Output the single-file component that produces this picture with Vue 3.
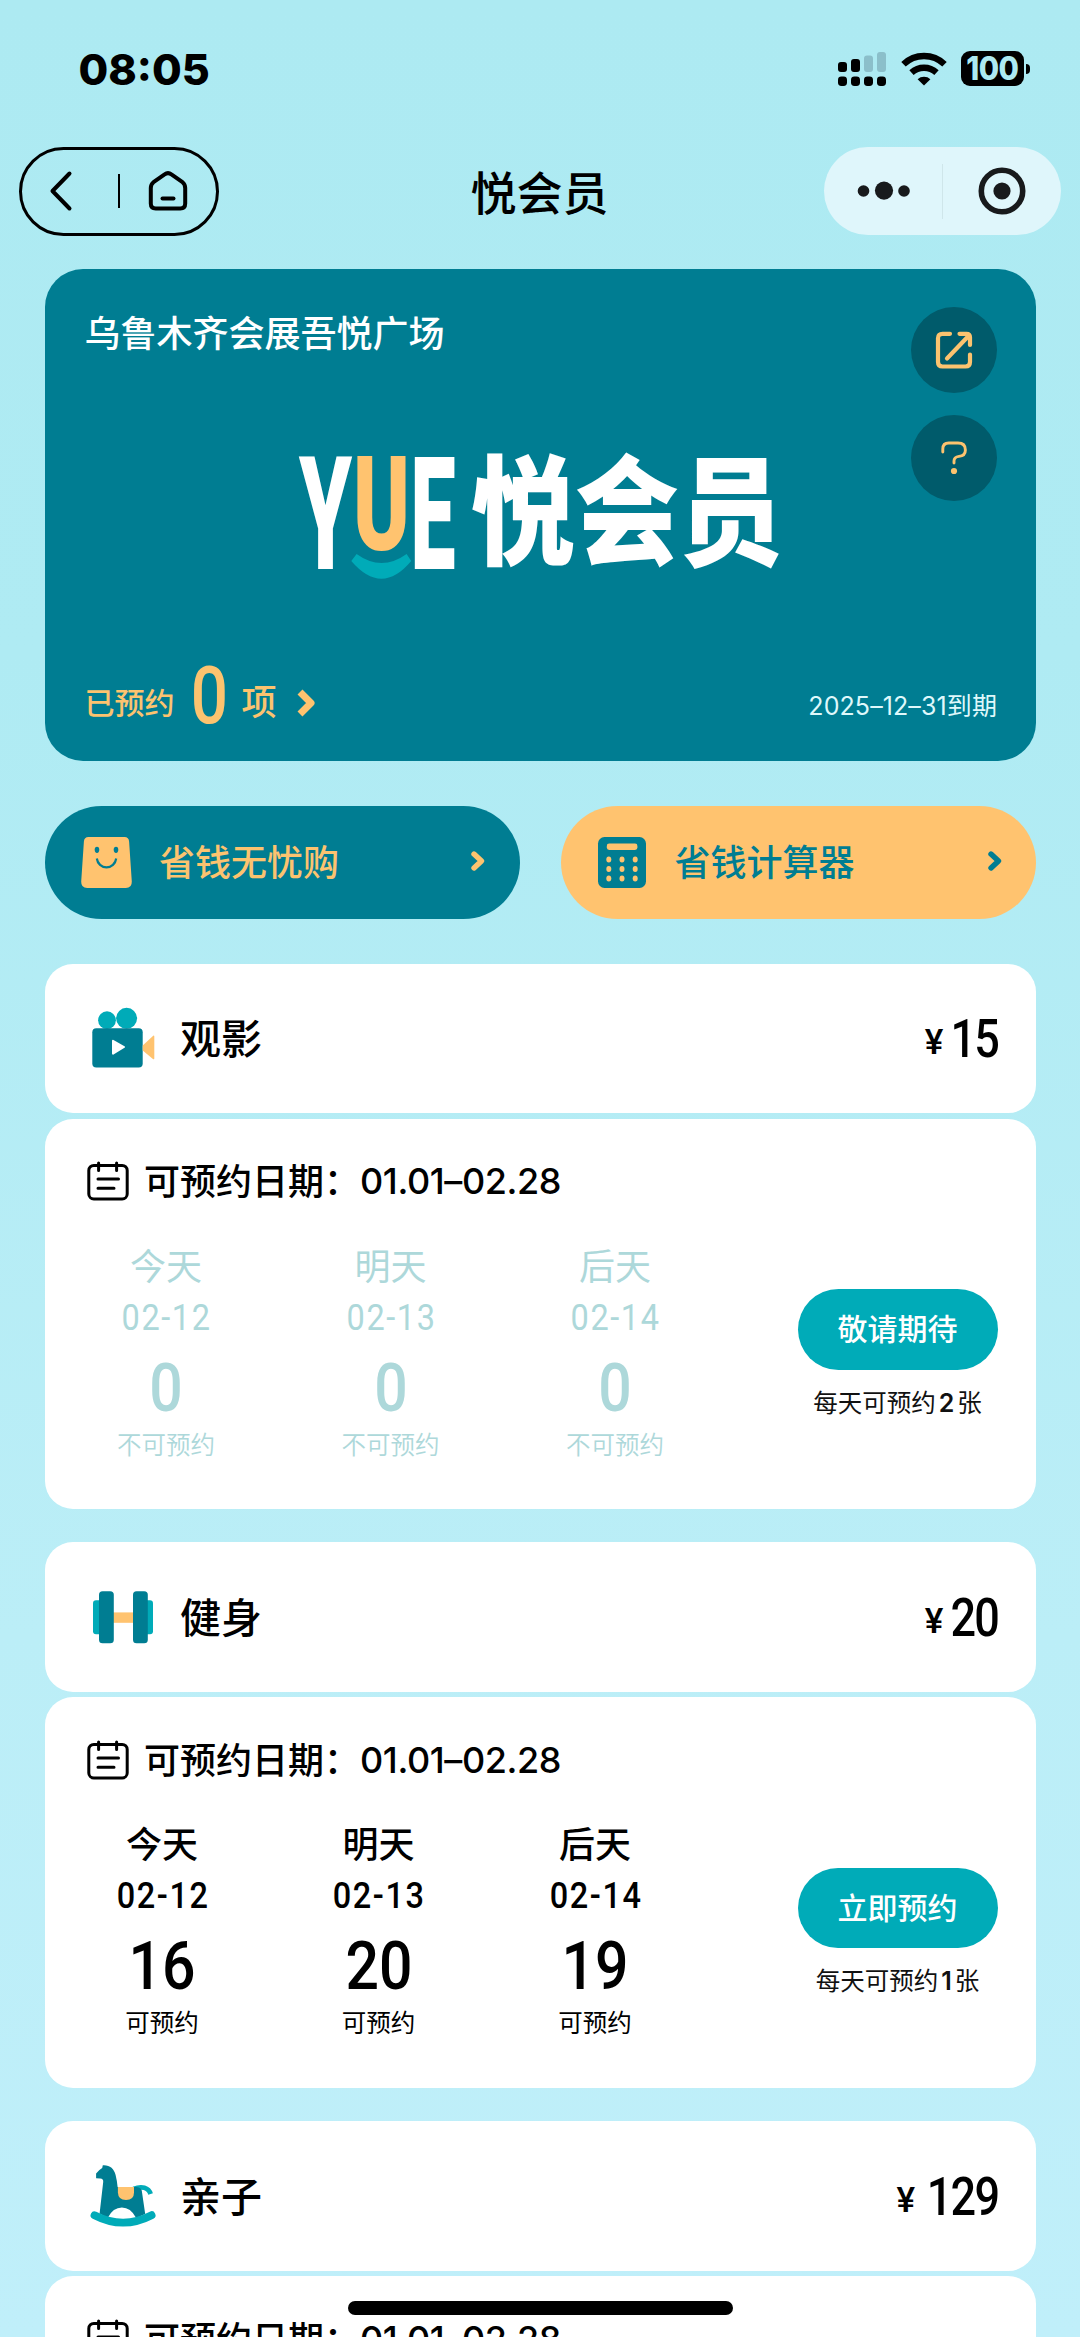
<script setup>
const services = [
  {
    icon: 'movie',
    name: '观影',
    price: '15',
    range: '01.01–02.28',
    soldOut: true,
    action: '敬请期待',
    limit: 2,
    days: [
      { label: '今天', date: '02-12', count: 0, status: '不可预约' },
      { label: '明天', date: '02-13', count: 0, status: '不可预约' },
      { label: '后天', date: '02-14', count: 0, status: '不可预约' },
    ],
  },
  {
    icon: 'fitness',
    name: '健身',
    price: '20',
    range: '01.01–02.28',
    soldOut: false,
    action: '立即预约',
    limit: 1,
    days: [
      { label: '今天', date: '02-12', count: 16, status: '可预约' },
      { label: '明天', date: '02-13', count: 20, status: '可预约' },
      { label: '后天', date: '02-14', count: 19, status: '可预约' },
    ],
  },
  {
    icon: 'kids',
    name: '亲子',
    price: '129',
    range: '01.01–02.28',
    days: [],
  },
]
const keyRows = [22.6, 32, 41.4]
const keyCols = [10.8, 24, 37.2]
</script>

<template>
  <div class="screen">
    <header class="status">
      <span class="time">08:05</span>
      <div class="indicators">
        <svg class="signal" width="48" height="36" viewBox="0 0 48 36">
          <rect x="0" y="11" width="9" height="10" rx="3" />
          <rect x="13" y="8" width="9" height="13" rx="3" />
          <rect x="26" y="4.5" width="9" height="16.5" rx="3" class="faint" />
          <rect x="39" y="1" width="9" height="20" rx="3" class="faint" />
          <rect v-for="x in [0, 13, 26, 39]" :key="x" :x="x" y="25.5" width="9" height="9.5" rx="3.4" />
        </svg>
        <svg class="wifi" width="46" height="34" viewBox="0 0 46 34">
          <g fill="none" stroke="#000" stroke-width="6.4">
            <path d="M2.5 12.3 A29.5 29.5 0 0 1 43.5 12.3" />
            <path d="M10.5 20.6 A18.5 18.5 0 0 1 35.5 20.6" />
          </g>
          <path d="M16.6 27.2 A9.5 9.5 0 0 1 29.4 27.2 L23 33.6 Z" />
        </svg>
        <div class="battery"><span>100</span></div>
        <i class="nub"></i>
      </div>
    </header>

    <nav class="nav">
      <div class="nav-left">
        <svg width="22" height="40" viewBox="0 0 22 40"><path d="M19.5 2.5 L2.5 20 L19.5 37.5" /></svg>
        <i></i>
        <svg width="40" height="40" viewBox="0 0 40 40">
          <path d="M16.6 3.4 Q20 0.8 23.4 3.4 L34.5 11.2 Q37.2 13.4 37.2 17 V32.5 Q37.2 37.4 32.3 37.4 H7.7 Q2.8 37.4 2.8 32.5 V17 Q2.8 13.4 5.5 11.2 Z" />
          <path d="M14.5 27.4 H25.5" />
        </svg>
      </div>
      <h1>悦会员</h1>
      <div class="nav-right">
        <svg width="54" height="20" viewBox="0 0 54 20">
          <circle cx="6.5" cy="10" r="5.8" /><circle cx="27" cy="9.6" r="9.1" /><circle cx="47" cy="10" r="5.8" />
        </svg>
        <i></i>
        <svg width="48" height="48" viewBox="0 0 48 48">
          <circle cx="24" cy="24" r="20.7" fill="none" stroke="#181a1c" stroke-width="5.6" />
          <circle cx="24" cy="24" r="8.6" />
        </svg>
      </div>
    </nav>

    <section class="member">
      <h2>乌鲁木齐会展吾悦广场</h2>
      <svg class="logo" width="484" height="134" viewBox="0 0 484 134">
        <g class="latin">
          <text transform="translate(0 117) scale(1 1.36)" textLength="53" lengthAdjust="spacingAndGlyphs" fill="#fff">Y</text>
          <text transform="translate(54 97.5) scale(1 1.13)" textLength="57" lengthAdjust="spacingAndGlyphs" fill="#ffc36f">U</text>
          <text transform="translate(111.5 117) scale(1 1.36)" textLength="45" lengthAdjust="spacingAndGlyphs" fill="#fff">E</text>
        </g>
        <path d="M57.6 102 Q82.6 120 107.6 102 L112.2 109 Q82.6 144.4 52.3 109 Z" fill="#00abb8" />
        <text class="hanzi" transform="translate(172 104) scale(1 1.15)" textLength="312" lengthAdjust="spacingAndGlyphs">悦会员</text>
      </svg>
      <div class="tools">
        <span>
          <svg width="38" height="38" viewBox="0 0 38 38">
            <g fill="none" stroke="#fcc36f" stroke-width="4.2" stroke-linecap="round" stroke-linejoin="round">
              <path d="M15 2.8 H7.5 Q3 2.8 3 7.3 V31 Q3 35.5 7.5 35.5 H30.5 Q35 35.5 35 31 V23.5" />
              <path d="M24.5 2.8 H31.5 Q35 2.8 35 6.3 V14 M33.5 5 L12 27.5" />
            </g>
          </svg>
        </span>
        <span>
          <svg width="28" height="34" viewBox="0 0 28 34">
            <path d="M2.8 11 V8 Q2.8 2 8.8 2 H18 Q25.4 2 25.4 9 Q25.4 14.8 19 15.4 Q14 16 14 20 V22" fill="none" stroke="#fcc36f" stroke-width="2.9" stroke-linecap="round" />
            <circle cx="14" cy="30" r="3.1" fill="#fcc36f" />
          </svg>
        </span>
      </div>
      <div class="booked">
        <span class="booked-label">已预约</span><b>0</b><span class="booked-unit">项</span>
        <svg width="20" height="28" viewBox="0 0 20 28"><path d="M3 3 L14 14 L3 25" fill="none" stroke="#ffc36f" stroke-width="7" stroke-linejoin="round" /></svg>
      </div>
      <p class="expiry">2025–12–31到期</p>
    </section>

    <section class="shortcuts">
      <a class="teal">
        <svg width="51" height="51" viewBox="0 0 51 51">
          <path d="M7.5 0 H43.5 Q47.8 0 48.1 4.5 L50.8 44.5 Q51 51 44.8 51 H6.2 Q0 51 .2 44.5 L2.9 4.5 Q3.2 0 7.5 0 Z" fill="#ffc36f" />
          <ellipse cx="16" cy="12.8" rx="2.3" ry="3.1" fill="#007d92" /><ellipse cx="35" cy="12.8" rx="2.3" ry="3.1" fill="#007d92" />
          <path d="M15.8 21.5 A9.8 10.4 0 0 0 35.2 21.5" fill="none" stroke="#007d92" stroke-width="2.2" />
        </svg>
        <span>省钱无忧购</span>
        <svg class="arrow" width="14" height="20" viewBox="0 0 14 20"><path d="M3 3 L10.5 10 L3 17" /></svg>
      </a>
      <a class="gold">
        <svg width="48" height="51" viewBox="0 0 48 51">
          <rect width="48" height="51" rx="6.5" fill="#007d92" />
          <rect x="8.8" y="6.5" width="30.6" height="6.4" rx="2.4" fill="#ffc36f" />
          <template v-for="y in keyRows" :key="y">
            <ellipse v-for="x in keyCols" :key="x" :cx="x" :cy="y" rx="2.5" ry="3" fill="#ffc36f" />
          </template>
        </svg>
        <span>省钱计算器</span>
        <svg class="arrow" width="14" height="20" viewBox="0 0 14 20"><path d="M3 3 L10.5 10 L3 17" /></svg>
      </a>
    </section>

    <section v-for="s in services" :key="s.name" class="service">
      <div class="head">
        <svg v-if="s.icon === 'movie'" width="66" height="66" viewBox="0 0 66 66">
          <circle cx="17" cy="15.2" r="8.9" fill="#00abb8" /><circle cx="36.6" cy="13.3" r="10.5" fill="#00abb8" />
          <rect x="2.3" y="23.3" width="50.4" height="39.2" rx="4" fill="#007d92" />
          <path d="M23 35.8 L34 42 L23 48.6 Z" fill="#fff" stroke="#fff" stroke-width="2" stroke-linejoin="round" />
          <path d="M52.7 40.5 L63.2 30.7 Q64.3 30.2 64.3 31.5 V53.5 Q64.3 54.6 63.2 54.2 L52.7 45.5 Z" fill="#ffc36f" />
        </svg>
        <svg v-else-if="s.icon === 'fitness'" width="66" height="66" viewBox="0 0 66 66">
          <rect x="3" y="16.3" width="14" height="34" rx="3" fill="#00abb8" /><rect x="49" y="16.3" width="14" height="34" rx="3" fill="#00abb8" />
          <rect x="22" y="28.4" width="22" height="10.4" fill="#ffc36f" />
          <rect x="9" y="7.3" width="14.8" height="52" rx="3.6" fill="#007d92" /><rect x="43" y="7.3" width="14.8" height="52" rx="3.6" fill="#007d92" />
        </svg>
        <svg v-else width="66" height="66" viewBox="0 0 66 66">
          <g transform="translate(.6 2)">
            <path d="M43 24 C51 20.6 58 22.5 60 29" fill="none" stroke="#00abb8" stroke-width="4.8" />
            <path d="M12.2 0.3 C19 -.2 23.5 3.5 25 10 Q26.5 16 27 22 H43.4 H46 Q50.4 22.5 51.2 25.8 L54.6 49 L45.6 53 Q40 42.6 31.3 42.6 Q22.5 42.6 17 53 L9 48.6 L12.6 17 Q13 13.6 9.6 13.4 L5.5 13.3 V8.6 Q8 5 11.6 3 Z" fill="#007d92" />
            <path d="M27.3 22 H43.4 V27.5 Q43.4 35 35.4 35 Q27.6 35 27.3 27.5 Z" fill="#ffc36f" />
            <path d="M3.9 50.2 Q32.5 65 61 50.2" fill="none" stroke="#00abb8" stroke-width="7.8" stroke-linecap="round" />
          </g>
        </svg>
        <h3>{{ s.name }}</h3>
        <div class="price"><i>¥</i><b>{{ s.price }}</b></div>
      </div>
      <div class="body">
        <div class="range">
          <svg width="42" height="40" viewBox="0 0 42 40">
            <g fill="none" stroke="#000" stroke-width="3" stroke-linecap="round">
              <rect x="1.8" y="4.4" width="38.4" height="33.6" rx="5" />
              <path d="M11.6 2 V9.6 M29.6 2 V9.6 M11 18 H31.5 M11 27.3 H27" />
            </g>
          </svg>
          <span class="range-label">可预约日期：</span><span class="range-value">{{ s.range }}</span>
        </div>
        <div v-if="s.days.length" class="slots">
          <div class="days" :class="{ off: s.soldOut }">
            <div v-for="d in s.days" :key="d.date" class="day">
              <span class="d-label">{{ d.label }}</span>
              <span class="d-date">{{ d.date }}</span>
              <b class="d-count">{{ d.count }}</b>
              <span class="d-status">{{ d.status }}</span>
            </div>
          </div>
          <div class="book">
            <button>{{ s.action }}</button>
            <p>每天可预约<b>{{ s.limit }}</b>张</p>
          </div>
        </div>
      </div>
    </section>
    <div class="home-bar"></div>
  </div>
</template>

<style>
body { margin: 0; }
</style>

<style scoped>
.screen {
  position: relative;
  box-sizing: border-box;
  width: 1080px;
  height: 2337px;
  overflow: hidden;
  padding: 0 44.5px;
  background: linear-gradient(#adeaf2 0%, #afebf3 28%, #bbeef7 70%, #c0effa 100%);
  color: #000;
  font-family: "Noto Sans CJK SC", sans-serif;
}
h1, h2, h3, p { margin: 0; font-weight: 500; }
i { font-style: normal; }
svg { display: block; flex: none; overflow: visible; }

.status {
  display: flex;
  justify-content: space-between;
  align-items: center;
  height: 137px;
  padding: 0 6px 0 34px;
}
.time { font: 800 43px/50px Inter, sans-serif; }
.indicators { display: flex; align-items: center; }
.wifi { margin-left: 15px; }
.faint { fill: #8bbfca; }
.battery {
  display: flex;
  align-items: center;
  justify-content: center;
  width: 63px;
  height: 35px;
  margin-left: 14px;
  border-radius: 9px;
  background: #000;
  color: #adeaf2;
}
.battery span { font: 800 32px/35px Inter, sans-serif; letter-spacing: -0.6px; transform: scaleX(.92); }
.nub { width: 4px; height: 10px; margin-left: 2px; border-radius: 0 5px 5px 0; background: #000; }

.nav {
  display: flex;
  justify-content: space-between;
  align-items: center;
  height: 88px;
  margin: 10px -25px 0;
}
.nav-left {
  box-sizing: border-box;
  display: flex;
  align-items: center;
  width: 200px;
  height: 89px;
  margin-left: -1px;
  padding-left: 28px;
  border: 3px solid #000;
  border-radius: 45px;
}
.nav-left svg { fill: none; stroke: #000; stroke-width: 4; stroke-linecap: round; stroke-linejoin: round; }
.nav-left i { width: 2.6px; height: 34px; margin: 0 28px 0 46px; background: #000; }
h1 { margin: -2px 0 0 37px; font-size: 46px; line-height: 60px; }
.nav-right {
  box-sizing: border-box;
  display: flex;
  align-items: center;
  width: 237px;
  height: 88px;
  padding-left: 33px;
  border-radius: 44px;
  background: #dff6fb;
}
.nav-right svg { fill: #181a1c; }
.nav-right i { width: 1.5px; height: 55px; margin: 0 35px 0 31px; background: #cfe6ea; }

.member {
  display: grid;
  grid-template: 1fr / 1fr;
  box-sizing: border-box;
  height: 492.5px;
  margin-top: 33.7px;
  padding: 38px 38.5px 28px 40px;
  border-radius: 38px;
  background: #007d92;
  color: #fff;
}
.member > * { grid-area: 1 / 1; }
h2 { font-size: 36px; line-height: 48px; }
.logo { align-self: start; justify-self: center; margin-top: 145px; }
.latin { font: 900 116px Roboto, sans-serif; }
.hanzi { font-size: 104px; font-weight: 900; fill: #fff; }
.tools { display: flex; flex-direction: column; gap: 22px; align-self: start; justify-self: end; width: 86px; }
.tools span {
  display: flex;
  align-items: center;
  justify-content: center;
  height: 86px;
  border-radius: 50%;
  background: #005b6b;
}
.booked { display: flex; align-items: center; align-self: end; height: 74px; color: #fcc36f; }
.booked-label { padding-top: 10px; font-size: 30px; line-height: 40px; font-weight: 500; }
.booked b { margin-left: 12px; font: 500 79px/74px Roboto, sans-serif; transform: scaleX(.83); }
.booked-unit { margin-left: 10px; padding-top: 7px; font-size: 35px; line-height: 40px; font-weight: 500; }
.booked svg { margin: 13px 0 0 21px; }
.expiry {
  align-self: end;
  justify-self: end;
  margin-bottom: 7px;
  font: 400 25px/40px Inter, "Noto Sans CJK SC", sans-serif;
  letter-spacing: 0.1px;
  color: #dff8fb;
}

.shortcuts { display: flex; gap: 41px; margin-top: 45px; }
.shortcuts a {
  box-sizing: border-box;
  display: flex;
  flex: 1;
  align-items: center;
  height: 113px;
  padding: 0 35px 0 36.5px;
  border-radius: 57px;
  font-size: 36px;
  line-height: 50px;
  font-weight: 500;
}
.shortcuts span { margin: -5px auto 0 27px; }
.shortcuts .arrow { margin-top: -4px; fill: none; stroke: currentColor; stroke-width: 5.4; stroke-linecap: round; stroke-linejoin: round; }
.teal { background: #007d92; color: #fcc36f; }
.gold { background: #ffc36f; color: #007d92; }
.shortcuts .gold { padding-right: 34px; }
.shortcuts .gold span { margin-left: 29px; }

.service { height: 545.6px; margin-bottom: 33.2px; }
.shortcuts + .service { margin-top: 44.5px; }
.head {
  box-sizing: border-box;
  display: flex;
  align-items: center;
  height: 149.6px;
  padding: 0 38px 0 45.5px;
  border-radius: 28px;
  background: #fff;
}
h3 { margin: -5px auto 0 24px; font-size: 41px; line-height: 60px; }
.price { display: flex; align-items: baseline; margin-top: 9px; font-family: Roboto, sans-serif; line-height: 60px; }
.price i { font-size: 35px; font-weight: 500; transform: translate(1px, -3px); }
.price b { margin-right: -1px; font-size: 53px; font-weight: 500; letter-spacing: -2px; transform: scaleX(.85); transform-origin: right; }
.body {
  box-sizing: border-box;
  height: 390.6px;
  margin-top: 5.4px;
  padding: 42px 38px 0 42.5px;
  border-radius: 28px;
  background: #fff;
}
.range { display: flex; align-items: center; height: 42px; font-size: 36px; line-height: 42px; font-weight: 500; }
.range svg { margin-top: -1px; }
.range-label { margin: -5px 0 0 15px; }
.range-value { margin-top: -1px; font-family: Inter, sans-serif; letter-spacing: -0.4px; }
.slots { display: flex; justify-content: space-between; margin-top: 38px; }
.days { display: flex; gap: 126.5px; margin-left: 30px; }
.off { color: #add8da; }
.day { display: flex; flex-direction: column; align-items: center; width: 90px; white-space: nowrap; }
.off .day { width: 98px; }
.d-label { font-size: 36px; line-height: 46px; font-weight: 500; }
.off .d-label { font-weight: 400; }
.d-date { padding-top: 4px; font: 500 36.5px/54px Roboto, sans-serif; letter-spacing: 1.8px; margin-right: -1.8px; transform: scaleX(.89); }
.off .d-date { font-weight: 400; }
.d-count { width: 0; display: flex; justify-content: center; font: 500 67px/86px Roboto, sans-serif; transform: scaleX(.88); }
.d-status { margin-top: -3px; font-size: 24.5px; line-height: 32px; }
.off .d-status { font-weight: 350; }
.book { display: flex; flex-direction: column; align-items: center; padding-top: 48.6px; }
button {
  width: 200px;
  height: 80.4px;
  border: 0;
  border-radius: 41px;
  padding: 0 0 5px;
  background: #00abb8;
  color: #fff;
  font: 500 30px/44px "Noto Sans CJK SC", sans-serif;
}
.book p { margin-top: 17px; font-size: 24.5px; line-height: 30px; font-weight: 400; color: #111; }
.book b { margin: 0 3px; font: 600 25px/30px Inter, sans-serif; }
.home-bar {
  position: absolute;
  left: 348px;
  bottom: 22px;
  width: 385px;
  height: 14px;
  border-radius: 7px;
  background: #000;
}
</style>
